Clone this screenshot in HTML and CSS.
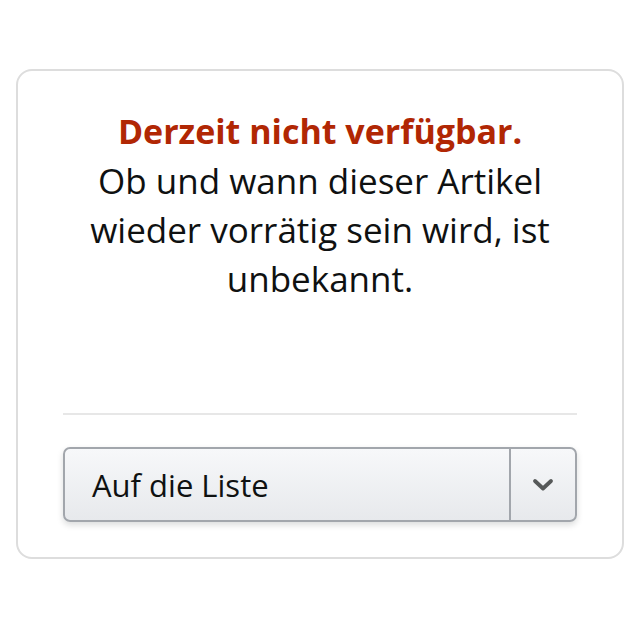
FILE: index.html
```html
<!DOCTYPE html>
<html lang="de">
<head>
  <meta charset="UTF-8" />
  <meta name="viewport" content="width=device-width, initial-scale=1.0" />
  <title>Derzeit nicht verfügbar</title>
  <link rel="stylesheet" href="styles.css">
</head>
<body>
  <div class="card">
    <div class="availability">
      <span class="status">Derzeit nicht verfügbar.</span>
      <span class="note">Ob und wann dieser Artikel wieder vorrätig sein wird, ist unbekannt.</span>
    </div>

    <hr class="divider">

    <div class="list-button">
      <span class="list-label">Auf die Liste</span>
      <span class="list-toggle">
        <svg width="22" height="14" viewBox="0 0 22 14">
          <polyline points="3,3 11,10.5 19,3" fill="none" stroke="#565959" stroke-width="3.8" stroke-linecap="round" stroke-linejoin="round" />
        </svg>
      </span>
    </div>
  </div>
</body>
</html>
```

FILE: styles.css
```css
:root {
  --ink: #0F1111;
  --red: #B12704;
  --line: #D5D9D9;
  --btn-border: #A2A6AC;
}

* {
  box-sizing: border-box;
  margin: 0;
  padding: 0;
}

html, body {
  background: #FFFFFF;
  font-family: 'Open Sans', 'Noto Sans', sans-serif;
  color: var(--ink);
}

body {
  padding: 69px 16px;
}

.card {
  border: 2px solid #DDDDDD;
  border-radius: 16px;
  padding: 36px 45px 35px;
}

.availability {
  display: flex;
  flex-direction: column;
  align-items: center;
  text-align: center;
  font-size: 35px;
  line-height: 49px;
  padding: 0 4px;
}

.status {
  color: var(--red);
  font-weight: 700;
  font-size: 34px;
}

.divider {
  border: none;
  border-top: 2px solid #E7E7E7;
  margin: 110px 0 32px;
}

.list-button {
  display: flex;
  height: 75px;
  border: 2px solid var(--btn-border);
  border-radius: 7px;
  background: linear-gradient(to bottom, #F7F8FA, #E7E9EC);
  box-shadow: 0 3px 6px rgba(15, 17, 17, 0.15);
}

.list-label {
  flex: 1;
  display: flex;
  align-items: center;
  padding-left: 27px;
  font-size: 31px;
}

.list-toggle {
  width: 66px;
  display: flex;
  align-items: center;
  justify-content: center;
  border-left: 2px solid var(--btn-border);
}
```
